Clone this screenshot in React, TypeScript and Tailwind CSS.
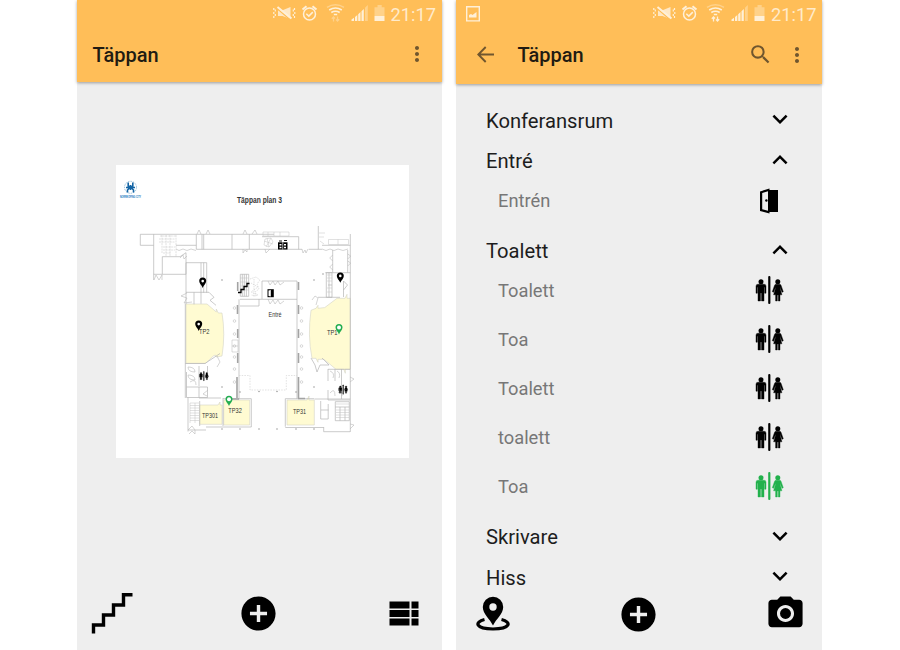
import React from "react";
import { MdAddCircle, MdExpandLess, MdExpandMore, MdMoreVert, MdPhotoCamera, MdSearch } from "react-icons/md";

function StatusIcons({ activeWifi = false }: { activeWifi?: boolean }) {
  return (
    <svg width="114" height="22" viewBox="0 0 114 22" className="shrink-0 text-[#fff0d8]" fill="currentColor">
      {/* muted speaker with vibration marks */}
      <g>
        <path d="M5 10.300h4.500L17.500 7v12L9.500 16H5z" opacity="0.85" />
        <path d="M4 8.500 17.500 20" stroke="#ffbe58" strokeWidth="1.200" fill="none" />
        <path d="M4.500 7 18.500 18.500" stroke="currentColor" strokeWidth="1.900" fill="none" />
        <path d="M.8 8v2M2.300 9.500v2M.8 12v2M2.300 14v2M.8 16v2M21.500 8v2M20.300 9.500v2M21.800 12v2M20.300 14v2M21.500 16v2" stroke="currentColor" strokeWidth="1.200" fill="none" />
      </g>
      {/* alarm clock */}
      <g fill="none" stroke="currentColor" strokeWidth="1.5">
        <circle cx="36.500" cy="14" r="6" />
        <path d="m33.300 13.800 2.500 2.300 4-4" />
        <path d="m29.500 9.500 4-3.300M43.500 9.500l-4-3.300" strokeWidth="2" />
      </g>
      {/* wifi */}
      <g fill="none" stroke="currentColor" strokeWidth="1.500">
        <path d="M54 7.300q8.500-5 17 0" opacity="0.4" />
        <path d="M56.200 10q6.300-4 12.600 0M58.300 12.500q4.200-2.700 8.400 0" />
        <path d="M60.800 14.500h3.400" />
        <path d="M60.500 21.500v-4.500m-1.700 1.700 1.700-1.700 1.500 1.500M64.500 16.500V21m-1.500-1.500 1.500 1.500 1.700-1.700" opacity={activeWifi ? 1 : 0.4} strokeWidth="1.300" />
      </g>
      {/* signal strength */}
      <path d="M78.500 21v-1.600L81 17.800V21zM82 21v-4l2.300-2V21zM85.200 21v-6.800l2.300-2.200v9zM88.500 21v-9.700l2.300-2.200V21z" />
      <path d="M92 21V7.800L94.800 5v16z" opacity="0.4" />
      {/* battery */}
      <path d="M101.500 7.300h3V5h4.200v2.300h2.800V16h-10z" opacity="0.4" />
      <path d="M101.500 16h10v5h-10z" />
    </svg>
  );
}

function StatusBar({ picture = false }: { picture?: boolean }) {
  return (
    <div className="flex h-7 items-start justify-end pr-[6px]">
      {picture && (
        <svg width="14" height="16" viewBox="0 0 14 16" className="mt-[6px] mr-auto ml-[10px] text-[#fff0d8]">
          <path d="M.7.700h12.600v14.200H.700z" fill="none" stroke="currentColor" strokeWidth="1.400" />
          <path d="M3 11.500V9l2-1 1.500 1 4-3v5.500z" fill="currentColor" />
        </svg>
      )}
      <StatusIcons activeWifi={picture} />
      <span className="ml-[4px] w-[45px] pt-[5px] text-[18.3px] leading-[20px] whitespace-nowrap text-[#ffebcb]">21:17</span>
    </div>
  );
}

function Pin({ x, y, color = "#000" }: { x: number; y: number; color?: string }) {
  return (
    <g transform={`translate(${x} ${y})`}>
      <path d="M0 10.200C-.8 7.500-3.500 6.200-3.500 3.400a3.500 3.500 0 0 1 7 0C3.500 6.200 .8 7.500 0 10.200z" fill={color} />
      <circle cy="3.400" r={color === "#000" ? 1.300 : 2} fill="#fff" />
    </g>
  );
}

function PeopleShapes() {
  return (
    <>
      <circle cx="6" cy="5.700" r="2.500" />
      <path d="M3 8.200h6a2 2 0 0 1 2 2v7H9.600v-6h-.6V25H6.500v-8h-1v8H3V11.200h-.6v6H1v-7a2 2 0 0 1 2-2z" stroke="currentColor" strokeWidth="0.400" />
      <rect x="13.200" y="0" width="2.200" height="28" rx="1" />
      <circle cx="22.800" cy="5.700" r="2.500" />
      <path d="M21 8.200h3.600q1 0 1.400 1l2.300 6.500-1.300.6-2-5 .2 1.500 1.700 6H25V25h-1.700v-6h-1v6h-1.700v-6.200h-2l1.800-6 .2-1.500-2 5-1.300-.6 2.300-6.500q.4-1 1.400-1z" stroke="currentColor" strokeWidth="0.400" />
    </>
  );
}

function MapPeople({ x, y }: { x: number; y: number }) {
  return (
    <g transform={`translate(${x} ${y}) scale(.34)`} fill="#000" stroke="#000" strokeWidth="0.800">
      <PeopleShapes />
    </g>
  );
}

const PILLARS = [308, 321, 334, 346, 357, 369, 382];
const CORNERS: number[][] = [[222, 280], [222, 387], [222, 429], [240, 429], [259, 429], [277, 429], [296, 429], [314, 429], [314, 280], [314, 387], [240, 392], [259, 391.500], [277, 391.500], [296, 392], [323, 274]];

function FloorPlan() {
  return (
    <svg width="293" height="293" viewBox="116 165 293 293" className="bg-white" fontFamily='"Liberation Sans", Arial, sans-serif' fill="none">
      <circle cx="130.500" cy="187.300" r="6" stroke="#6fa8cf" strokeWidth="0.700" strokeDasharray="1.500 1" />
      <path d="M128.200 182.500v3.500l2.300 1.500 2.300-1.500v-3.500M126 187.500h9M127.500 192.500v-2.500l3-3 3 3v2.500M130.500 185v5" stroke="#1465a5" strokeWidth="1.600" />
      <text x="120" y="198.400" fontSize="2.700" fontWeight="bold" fill="#1474bd" textLength="21" lengthAdjust="spacingAndGlyphs">NORRKÖPING CITY</text>
      <text x="237" y="202.800" fontSize="8.800" fontWeight="bold" fill="#333" textLength="45" lengthAdjust="spacingAndGlyphs">Täppan plan 3</text>

      <g fill="#fffbd2" stroke="#d4d4c8" strokeWidth="0.600">
        <path d="M186 304h21l9.300 8V309l2 4h3.700q3.500 21 0 43l-5.700 1-1-2-2 1-7.700 7.300H186z" />
        <path d="M337 298.300h8l2-4v4h3.300v71h-5v4l-1.500-4H336l-12-10h-6v3l-2-4h-4q-4.600-23-1-48l5-2 2-3v3l6.700-.7z" />
        <path d="M199.700 405H218l2-3v3h2v19.300h-22.300zM223.700 400h26v25h-26zM287 400h20l2-4v4h5.300v25H287z" />
      </g>

      <g stroke="#b4b4b4" strokeWidth="0.700">
        <path d="M140.300 234.300H274M140.300 234.300v11M140.300 245.300h13.400M153.700 234.300V280M153.700 274.300H186M162.300 256.700v17.600M162.300 256.700H180l6-4v21.600M176 245.300h20.300M196.300 234.300v15M196.300 249.300H302M203.700 234.300v15M202 234.300v15M232 234.300v15M249.300 234.300v15M262 236.700h36.700M298.700 236.700v12.600M308.700 249.300H322M318.300 226v23.300M322 245.300h28.400M350.300 234v198" />
        <path d="M186 262.700h20.700M186 262.700V304M206.700 262.700v30M201 262.700v41M203.700 262.700v30M186 292.300h23M194 292.300v12M185.300 304V398M209 292.300l5 5-4 3 6 5" />
        <path d="M240.300 274.300h8.400v22h-8.400zM242.300 274.300v22M244.300 274.300v22M246.400 274.300v22M262 281h35M240 299.300h57M262 281v18M240 306h19v-7" />
        <path d="M239 299.300v100M297 281v118M332.700 250v22.700M347.700 250v22.700M325.300 272.700h25M326.300 272.700h5.700v24.600h-5.700zM329 272.700v24.600M328 285h4M318 297.300h22M343.500 281v16M343.500 281l4 4-4 5" />
        <path d="M185.300 363.500H205l15-10M186.500 372v15h21M186.500 387v10.500h21V387M199 387v10.500M199 366v20M207.500 366v10M188 397.500v34M188 430h18M206 427h45.300V398.700H223M199.700 401v25M223 398v28M221 398h-22" />
        <path d="M285.300 426.700V398.700h28.700M285.300 427.500h38.400M323.700 427v4.700H350M314.300 399h36M320.700 401v18h7.500v-15M335.300 401.700h14v19h-14zM340 407v13.700M345 407v13.700M335.300 407h14M328 369.300h22M328 369v12M328 390v10h22M341.500 369v30M335 369v12M321 410h7.500" />
        <path d="M311 358l4 7 2 7 3-7h9l-7-7" />
      </g>

      {/* stairs and thin partitions */}
      <g stroke="#c2c2c2" strokeWidth="0.500">
        <path d="M160 236h16M159 239h16M159 242h16M162 235v18M166 235v21M170 235v21M163 247h12M163 250h12M163 253h8M176 235v22" strokeDasharray="2 .7" />
        <path d="M190 403h9M190 405.500h9M190 408h9M190 410.500h9M190 413h9M190 415.500h9M190 418h9M190 420.500h9M190 403v20M195 403v20" />
        <path d="M336 404h13M336 410h13M336 412.500h13M336 415h13M336 417.500h13M240 278h8.500M240 282h8.500M240 286h8.500M240 290h8.500M327 275h5M327 278h5M327 281h5M327 288h5M327 292h5" />
        <path d="M265 239l6-1 2 4-4 5-5-2zM264 241l9 3M267 238l2 9M271 238l-5 9M263 236h26v-4h-26zM268 232v4M274 232v4M280 232v4" />
        <path d="M328.500 239.500h20v5h-20zM338 239.500v5M319 233h6M319 237h5M320 241l4 3" />
        <path d="M250 279l6-2 4 3-3 4 2 5-4 3 2 4-6-1M254 279v18M251 283l7 4-7 5 7 3" strokeDasharray="1.500 .8" />
      </g>

      {/* swinging doors */}
      <g stroke="#b8b8b8" strokeWidth="0.600">
        <path d="M197 234l2-4 2 4M206 234l2-4 2 4M243 234l2-4 2 4M252 234l3-4 2 4M154 280l2-5 3 5 3-5v5M176 249l3 1.500 4-1.500 4 1.500 4-1.500 5 1.500M180 258l3-3 1 4 3-3M243 249v4l2-3 2 2v-3M265 249l1 4 4-4M302 249l1 4 2-3 1 3 2-4M322 249l4 1.500 4-1.500 4 1.500 4-1.500 5 1.500 5-1.500" />
        <path d="M347.700 254l3 2-3 3M347.700 261l3 2-3 3M332.700 255l-3 3 3 3M332.700 264l-3 3 3 3M268 281l2 4 3-4 2 4 3-4 2 4 4-3M268 299l2 5 3-4 2 4 3-4 2 4 4-3M187 293l-6 3 6 2-3 5 8-1" />
        <path d="M188 367q7 0 7 5-7 0-7-5M188 375q7 0 7 5-7 0-7-5M190 382q6-4 6 3M208 390l-5 4 4 2M188 430l4-4 3 4v4l-3-3-3 3M350 377l4 2-4 3M350 424l4 1-4 4M330 371q5 2 3 7M337 371q4 2 2 7M330 393q5-6 5 3M338 393q4-6 4 3M312 300l3-4 3 2-2 7M217 356l3 6-3 5" />
      </g>

      <g stroke="#a3a3a3" strokeWidth="1.600">
        <path d="M237.700 282v9M237.500 305v9M237.700 329v9M237.700 353v10M237 377v21M232 399h7" />
        <path d="M298.500 282v8M298.500 305v9M298.500 329v9M298.500 353v10M298.500 377v21M298 398.500h7" />
      </g>
      <path d="M239 375.500h11v14.500h36.300v-14.500H297" stroke="#cfcfcf" strokeWidth="0.600" strokeDasharray="1.500 1.200" />
      <g stroke="#b5b5b5" strokeWidth="0.500">
        {PILLARS.map((y) => (
          <React.Fragment key={y}>
            <circle cx="234.500" cy={y} r="1.300" />
            <circle cx="301.500" cy={y} r="1.300" />
          </React.Fragment>
        ))}
        <path d="M232 340h6v12h-6zM232 346h6" />
      </g>
      {CORNERS.map(([x, y]) => <circle key={`${x}-${y}`} cx={x} cy={y} r="0.700" fill="#888" />)}

      <g fill="#333" fontSize="7.600">
        <text x="268.500" y="317" textLength="13" lengthAdjust="spacingAndGlyphs">Entré</text>
        <text x="199" y="334" textLength="10.500" lengthAdjust="spacingAndGlyphs">TP2</text>
        <text x="327" y="334.700" textLength="10.500" lengthAdjust="spacingAndGlyphs">TP1</text>
        <text x="228.300" y="413.400" textLength="13.500" lengthAdjust="spacingAndGlyphs">TP32</text>
        <text x="202" y="417.700" textLength="16" lengthAdjust="spacingAndGlyphs">TP301</text>
        <text x="293" y="413.500" textLength="13" lengthAdjust="spacingAndGlyphs">TP31</text>
      </g>

      <path d="M238 292.500h3v-3h3v-3h3v-3h2.500" stroke="#000" strokeWidth="1.300" />
      <path d="M278 242.300h9.500v7.200H278z" fill="#000" />
      <path d="M279.500 244h2v1.500h-2zM284 244h2v1.500h-2zM279.500 246.800h2v1.500h-2zM284 246.800h2v1.500h-2zM282.500 242.300h.7v7.200h-.7z" fill="#fff" />
      <path d="M279 241h3M284 240.500h3" stroke="#000" strokeWidth="0.900" />
      <path d="M267.500 289.200h6.300v8h-6.300z" fill="#000" />
      <path d="M268.500 290.500l2.300-.4v6.400l-2.300-.4z" fill="#fff" />
      <Pin x={202.700} y={277.700} />
      <Pin x={340.300} y={272.500} />
      <Pin x={198.700} y={320.700} />
      <Pin x={229} y={395.800} color="#22ad50" />
      <Pin x={339} y={324.200} color="#22ad50" />
      <MapPeople x={199} y={371.300} />
      <MapPeople x={338.300} y={384.800} />
    </svg>
  );
}

function GroupRow({ label, open = false }: { label: string; open?: boolean }) {
  const Chevron = open ? MdExpandLess : MdExpandMore;
  return (
    <div className="flex h-[40.5px] items-center justify-between pt-[2px] pr-[27px] pl-[30px]">
      <span className="text-[20.2px] leading-6 text-[#1d1d1d]">{label}</span>
      <Chevron size={30} className="mb-[3px] text-black" />
    </div>
  );
}

function ItemRow({ label, door = false, green = false }: { label: string; door?: boolean; green?: boolean }) {
  return (
    <div className="flex h-10 items-center justify-between pr-[38px] pl-[42px]">
      <span className="text-[18.3px] leading-6 text-[#777]">{label}</span>
      {door ? (
        <svg width="20" height="26" viewBox="0 0 20 26" className="mr-[5px]">
          <path d="M1 3.500 10.500.500V2H19v22h-8.500v1.500L1 23z" fill="#000" />
          <path d="m3.200 5 5.800-1.700v19.400L3.200 21.200z" fill="#eee" />
          <circle cx="7.400" cy="12.500" r="1.200" fill="#000" />
        </svg>
      ) : (
        <svg width="29" height="28" viewBox="0 0 29 28" className={green ? "mb-[2px] text-[#22b14c]" : "mb-[2px] text-black"} fill="currentColor">
          <PeopleShapes />
        </svg>
      )}
    </div>
  );
}

function MapScreen() {
  return (
    <section className="flex h-full w-[364.5px] flex-col bg-[#eee]">
      <header className="h-[82px] shrink-0 bg-[#ffbe58] shadow-[0_1px_3px_rgba(0,0,0,0.35)]">
        <StatusBar />
        <div className="flex h-[54px] items-center justify-between pr-[13px] pl-[15.5px]">
          <h1 className="text-[20px] leading-6 font-medium text-[#211b12]">Täppan</h1>
          <MdMoreVert size={24} className="mb-[2px] text-[#70562e]" />
        </div>
      </header>
      <main className="flex min-h-0 flex-1 justify-center pt-[83px] pl-[6.5px]">
        <FloorPlan />
      </main>
      <footer className="flex h-[74px] shrink-0 items-center justify-between pr-[22.5px] pl-[14px]">
        <svg width="42" height="42" viewBox="0 0 42 42" className="mt-[2px] shrink-0">
          <path d="M2.500 40.500V32h10V22h10V12h10V1.800h9" fill="none" stroke="#000" strokeWidth="3.400" />
        </svg>
        <MdAddCircle size={41} className="mr-[6px] text-black" />
        <svg width="30" height="25" viewBox="0 0 30 25">
          <path d="M.500.500h20v7h-20zM22.500.500h7v7h-7zM.500 9h20v7h-20zM22.500 9h7v7h-7zM.500 17.500h20v7h-20zM22.500 17.500h7v7h-7z" fill="#000" />
        </svg>
      </footer>
    </section>
  );
}

function ListScreen() {
  return (
    <section className="flex h-full w-[366px] flex-col bg-[#eee]">
      <header className="h-[83.5px] shrink-0 bg-[#ffbe58] shadow-[0_1px_3px_rgba(0,0,0,0.35)]">
        <StatusBar picture />
        <div className="flex h-[54px] items-center pr-[13px] pl-[20.5px]">
          <svg width="17" height="17" viewBox="0 0 17 17" fill="none" stroke="#70562e" strokeWidth="1.900" className="mb-[1px]">
            <path d="M17 8.500H1.500M8.700 1 1.300 8.500l7.400 7.500" />
          </svg>
          <h1 className="ml-[24px] text-[20px] leading-6 font-medium text-[#211b12]">Täppan</h1>
          <MdSearch size={25} className="mb-[2px] ml-auto text-[#70562e]" />
          <MdMoreVert size={24} className="ml-[12px] text-[#70562e]" />
        </div>
      </header>
      <main className="flex min-h-0 flex-1 flex-col pt-[16px]">
        <GroupRow label="Konferansrum" />
        <GroupRow label="Entré" open />
        <ItemRow label="Entrén" door />
        <div className="mt-[9.5px]">
          <GroupRow label="Toalett" open />
        </div>
        <div className="mb-[9.5px] flex flex-col gap-[9px]">
          <ItemRow label="Toalett" />
          <ItemRow label="Toa" />
          <ItemRow label="Toalett" />
          <ItemRow label="toalett" />
          <ItemRow label="Toa" green />
        </div>
        <GroupRow label="Skrivare" />
        <GroupRow label="Hiss" />
      </main>
      <footer className="flex h-[52px] shrink-0 items-start justify-between pr-[16px] pl-[19px]">
        <svg width="36" height="36" viewBox="0 0 36 36" className="mt-[-2px]">
          <path d="M9.500 23.500C-1 26 .500 33 18 33s19-7 8.500-9.500" fill="none" stroke="#000" strokeWidth="3.200" />
          <path d="M18 29.500C15 23 7.800 18 7.800 11a10.200 10.200 0 0 1 20.400 0C28.200 18 21 23 18 29.500z" fill="#000" />
          <circle cx="18" cy="11" r="3.700" fill="#eee" />
        </svg>
        <MdAddCircle size={41} className="-mt-[4px] text-black" />
        <MdPhotoCamera size={41} className="-mt-[5px] text-black" />
      </footer>
    </section>
  );
}

export default function App() {
  return (
    <div className="flex h-[650px] w-[900px] gap-[14.5px] overflow-hidden bg-white pl-[77px] font-[Roboto,sans-serif]">
      <MapScreen />
      <ListScreen />
    </div>
  );
}
